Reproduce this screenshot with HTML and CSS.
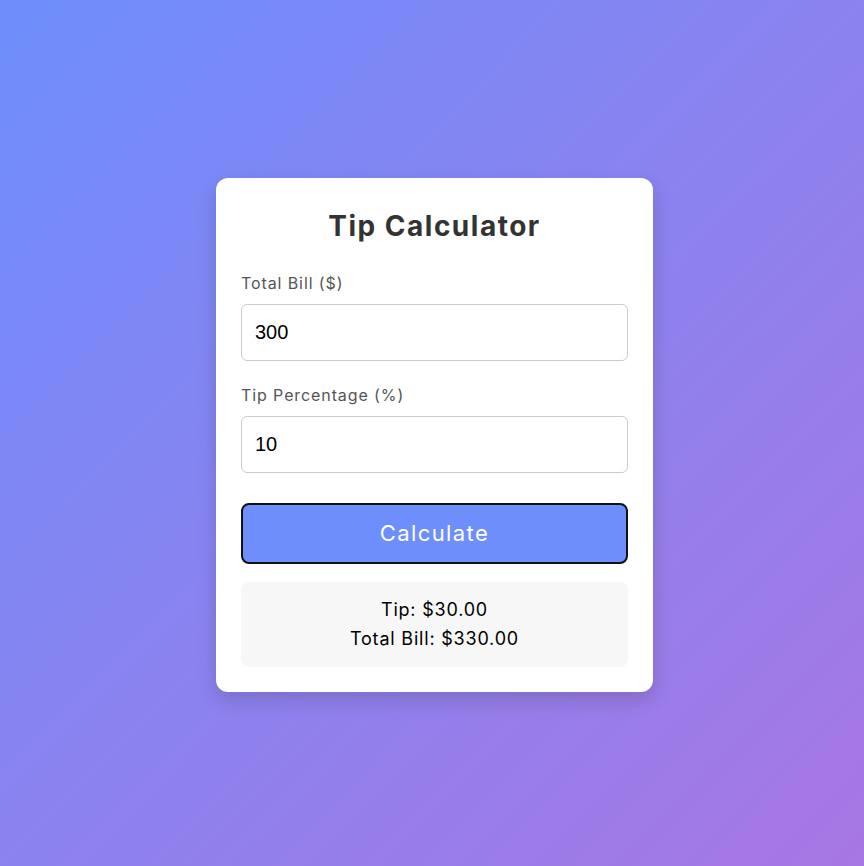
FILE: index.html
```html
<!DOCTYPE html>
<html lang="en">
<head>
<meta charset="utf-8">
<title>Tip Calculator</title>
<link rel="stylesheet" href="styles.css">
</head>
<body>
<main class="card">
  <h1 class="title">Tip Calculator</h1>
  <label class="label" for="bill">Total Bill ($)</label>
  <input class="field" id="bill" type="number" value="300">
  <label class="label" for="tip">Tip Percentage (%)</label>
  <input class="field" id="tip" type="number" value="10">
  <button class="btn" type="button">Calculate</button>
  <div class="result">
    <p class="line">Tip: $30.00</p>
    <p class="line">Total Bill: $330.00</p>
  </div>
</main>
</body>
</html>
```
FILE: styles.css
```css
* { box-sizing: border-box; }
html, body { height: 100%; }
body {
  margin: 0;
  padding-left: 5px;
  padding-top: 3px;
  font-family: Inter, "Open Sans", sans-serif;
  background: linear-gradient(135deg, #6e8efb, #a777e3);
  display: flex;
  align-items: center;
  justify-content: center;
}
.card {
  width: 437px;
  background: #fff;
  border-radius: 12px;
  padding: 27px 25px 25px;
  box-shadow: 0 8px 20px rgba(0,0,0,0.15);
  display: flex;
  flex-direction: column;
}
.title {
  margin: 0 0 24px;
  text-align: center;
  font-size: 28px;
  line-height: 42px;
  font-weight: 700;
  letter-spacing: 1.5px;
  color: #333;
}
.label {
  font-size: 16px;
  line-height: 24px;
  color: #555;
  letter-spacing: 0.9px;
  margin-bottom: 9px;
}
.field {
  height: 57px;
  padding: 0 13px;
  border: 1px solid #ccc;
  border-radius: 6px;
  font-family: "Liberation Sans", Arial, sans-serif;
  font-size: 20px;
  color: #000;
  margin-bottom: 22px;
  -moz-appearance: textfield;
}
.field::-webkit-inner-spin-button, .field::-webkit-outer-spin-button { -webkit-appearance: none; margin: 0; }
.field + .btn { margin-top: 8px; }
.btn {
  height: 61px;
  background: #6e8efb;
  color: #fff;
  border: 2px solid #111;
  border-radius: 8px;
  font-family: inherit;
  font-size: 22px;
  letter-spacing: 1.4px;
  cursor: pointer;
}
.result {
  margin-top: 18px;
  background: #f7f7f7;
  border-radius: 8px;
  padding: 13px 10px 14px;
  text-align: center;
  font-size: 18px;
  letter-spacing: 0.8px;
  color: #000;
}
.line { margin: 0; line-height: 29px; }
```
